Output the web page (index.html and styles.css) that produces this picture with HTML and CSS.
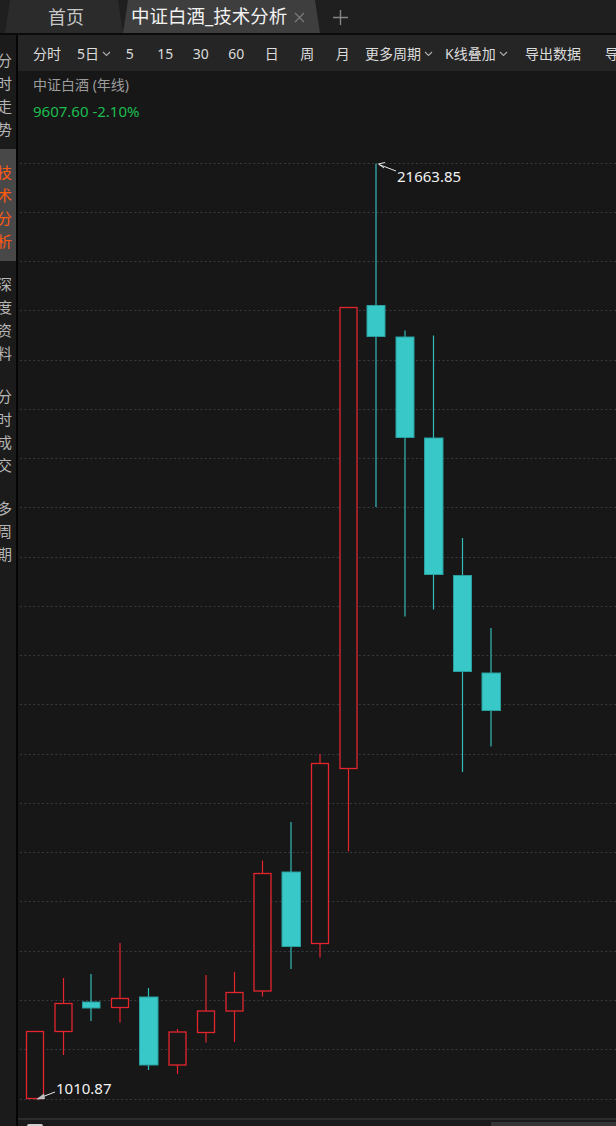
FILE: index.html
```html
<!DOCTYPE html>
<html lang="zh-CN">
<head>
    <meta charset="UTF-8">
    <meta name="viewport" content="width=device-width, initial-scale=1.0">
    <title>中证白酒_技术分析</title>
    <link rel="stylesheet" href="styles.css">
</head>
<body>
    <div class="app">
        <div class="tabbar">
            <div class="tab">首页</div>
            <div class="tab tab-active">
                <span>中证白酒_技术分析</span>
                <svg class="tab-close" width="11" height="11" viewBox="0 0 11 11">
                    <path d="M1 1 L10 10 M10 1 L1 10" stroke="#7a7a7a" stroke-width="1.3"/>
                </svg>
            </div>
            <svg class="tab-add" width="15" height="15" viewBox="0 0 15 15">
                <path d="M7.5 0 V15 M0 7.5 H15" stroke="#858585" stroke-width="1.4"/>
            </svg>
        </div>

        <div class="workspace">
            <aside class="side">
                <div class="side-item"><div class="side-text">分时走势</div></div>
                <div class="side-item side-active"><div class="side-text">技术分析</div></div>
                <div class="side-item"><div class="side-text">深度资料</div></div>
                <div class="side-item"><div class="side-text">分时成交</div></div>
                <div class="side-item"><div class="side-text">多周期</div></div>
            </aside>

            <main class="main">
                <div class="toolbar">
                    <span class="tb-first">分时</span>
                    <span class="tb-drop">5日<svg class="chev" width="9" height="6" viewBox="0 0 9 6"><path d="M1 1 L4.5 4.5 L8 1" fill="none" stroke="#aaa" stroke-width="1.2"/></svg></span>
                    <span class="tb-num">5</span>
                    <span class="tb-num">15</span>
                    <span class="tb-num">30</span>
                    <span class="tb-num">60</span>
                    <span class="tb-num">日</span>
                    <span class="tb-num">周</span>
                    <span class="tb-num">月</span>
                    <span class="tb-wide">更多周期<svg class="chev" width="9" height="6" viewBox="0 0 9 6"><path d="M1 1 L4.5 4.5 L8 1" fill="none" stroke="#aaa" stroke-width="1.2"/></svg></span>
                    <span class="tb-wide">K线叠加<svg class="chev" width="9" height="6" viewBox="0 0 9 6"><path d="M1 1 L4.5 4.5 L8 1" fill="none" stroke="#aaa" stroke-width="1.2"/></svg></span>
                    <span class="tb-wide">导出数据</span>
                    <span class="tb-wide">导出图片</span>
                </div>

                <div class="chart">
                    <div class="chart-info">
                        <div class="chart-title">中证白酒 (年线)</div>
                        <div class="chart-value">9607.60 -2.10%</div>
                    </div>

                    <svg class="kline" width="598" height="987" viewBox="18 131 598 987">
                        <!-- 网格线 -->
                        <g class="grid">
                            <line x1="20" x2="616" y1="163.5" y2="163.5"/>
                            <line x1="20" x2="616" y1="212.5" y2="212.5"/>
                            <line x1="20" x2="616" y1="261.5" y2="261.5"/>
                            <line x1="20" x2="616" y1="310.5" y2="310.5"/>
                            <line x1="20" x2="616" y1="360.5" y2="360.5"/>
                            <line x1="20" x2="616" y1="409.5" y2="409.5"/>
                            <line x1="20" x2="616" y1="458.5" y2="458.5"/>
                            <line x1="20" x2="616" y1="507.5" y2="507.5"/>
                            <line x1="20" x2="616" y1="557.5" y2="557.5"/>
                            <line x1="20" x2="616" y1="606.5" y2="606.5"/>
                            <line x1="20" x2="616" y1="655.5" y2="655.5"/>
                            <line x1="20" x2="616" y1="704.5" y2="704.5"/>
                            <line x1="20" x2="616" y1="754.5" y2="754.5"/>
                            <line x1="20" x2="616" y1="803.5" y2="803.5"/>
                            <line x1="20" x2="616" y1="852.5" y2="852.5"/>
                            <line x1="20" x2="616" y1="901.5" y2="901.5"/>
                            <line x1="20" x2="616" y1="951.5" y2="951.5"/>
                            <line x1="20" x2="616" y1="1000.5" y2="1000.5"/>
                            <line x1="20" x2="616" y1="1049.5" y2="1049.5"/>
                            <line x1="20" x2="616" y1="1099.5" y2="1099.5"/>
                        </g>

                        <!-- 阳线 -->
                        <g class="up">
                            <rect x="26.5" y="1031.5" width="17" height="67"/>

                            <line x1="63.5" x2="63.5" y1="978" y2="1003.5"/>
                            <line x1="63.5" x2="63.5" y1="1031.5" y2="1055"/>
                            <rect x="55" y="1003.5" width="17" height="28"/>

                            <line x1="120" x2="120" y1="943" y2="998.5"/>
                            <line x1="120" x2="120" y1="1007.5" y2="1022.5"/>
                            <rect x="111.5" y="998.5" width="17" height="9"/>

                            <line x1="177.5" x2="177.5" y1="1029" y2="1032"/>
                            <line x1="177.5" x2="177.5" y1="1065" y2="1074"/>
                            <rect x="169" y="1032" width="17" height="33"/>

                            <line x1="206" x2="206" y1="975" y2="1011"/>
                            <line x1="206" x2="206" y1="1032.5" y2="1042.5"/>
                            <rect x="197.5" y="1011" width="17" height="21.5"/>

                            <line x1="234.5" x2="234.5" y1="972" y2="992.5"/>
                            <line x1="234.5" x2="234.5" y1="1011" y2="1042"/>
                            <rect x="226" y="992.5" width="17" height="18.5"/>

                            <line x1="262.5" x2="262.5" y1="860.5" y2="873.5"/>
                            <line x1="262.5" x2="262.5" y1="991" y2="996.5"/>
                            <rect x="254" y="873.5" width="17" height="117.5"/>

                            <line x1="320" x2="320" y1="754" y2="763.5"/>
                            <line x1="320" x2="320" y1="943.5" y2="957.5"/>
                            <rect x="311.5" y="763.5" width="17" height="180"/>

                            <line x1="348.5" x2="348.5" y1="768.5" y2="851.5"/>
                            <rect x="340" y="307.5" width="17" height="461"/>
                        </g>

                        <!-- 阴线 -->
                        <g class="down">
                            <line x1="91" x2="91" y1="974" y2="1021"/>
                            <rect x="82.5" y="1002" width="17.5" height="6"/>

                            <line x1="148.5" x2="148.5" y1="988" y2="1070"/>
                            <rect x="139.5" y="997" width="18.5" height="68"/>

                            <line x1="291" x2="291" y1="822" y2="969"/>
                            <rect x="282" y="872" width="18.5" height="74.5"/>

                            <line x1="376" x2="376" y1="163.5" y2="507"/>
                            <rect x="367" y="305.5" width="18" height="31"/>

                            <line x1="405" x2="405" y1="330.5" y2="616.5"/>
                            <rect x="396" y="337" width="18" height="100.5"/>

                            <line x1="433.5" x2="433.5" y1="335.5" y2="609.5"/>
                            <rect x="424.5" y="438" width="18.5" height="136.5"/>

                            <line x1="462.5" x2="462.5" y1="538" y2="772"/>
                            <rect x="453.5" y="575.5" width="18" height="96"/>

                            <line x1="491" x2="491" y1="628" y2="746.5"/>
                            <rect x="482" y="673" width="18.5" height="37.5"/>
                        </g>

                        <!-- 最高 / 最低 标注 -->
                        <g class="mark">
                            <line x1="379" y1="164.5" x2="396" y2="171"/>
                            <path d="M385 162.5 L378.5 164 L384 168"/>
                            <text x="397" y="182">21663.85</text>

                            <line x1="38" y1="1098.5" x2="55" y2="1092"/>
                            <path class="mark-head" d="M36 1099.5 L44 1093.5 L45 1099 Z"/>
                            <text x="56" y="1094">1010.87</text>
                        </g>
                    </svg>
                </div>

                <div class="footer">
                    <span class="footer-btn"></span>
                    <span class="footer-thumb"></span>
                </div>
            </main>
        </div>
    </div>
</body>
</html>
```

FILE: styles.css
```css
body {
    margin: 0;
    background: #181818;
    font-family: "Noto Sans", "Noto Sans CJK SC", sans-serif;
    overflow: hidden;
}

.app {
    width: 616px;
    height: 1126px;
    display: flex;
    flex-direction: column;
}

/* 顶部标签栏 */
.tabbar {
    height: 33px;
    flex-shrink: 0;
    display: flex;
    align-items: flex-end;
    background: #1f1f20;
    border-bottom: 2px solid #0b0b0b;
    padding-left: 5px;
}

.tab {
    height: 33px;
    width: 118px;
    display: flex;
    align-items: center;
    justify-content: center;
    padding-left: 4px;
    box-sizing: border-box;
    background: #2b2b2c;
    color: #c8c8c8;
    font-size: 18px;
    line-height: 1;
    clip-path: polygon(5px 0, calc(100% - 5px) 0, 100% 100%, 0 100%);
    border-radius: 6px 6px 0 0;
}

.tab-active {
    width: 197px;
    justify-content: flex-start;
    padding-left: 8px;
    background: #3e3e3f;
    color: #f2f2f2;
    font-size: 18.5px;
}

.tab-close {
    margin-left: 7px;
    margin-top: 1px;
}

.tab-add {
    align-self: center;
    margin-left: 13px;
    margin-top: 1px;
}

.workspace {
    flex: 1;
    display: flex;
    min-height: 0;
}

/* 左侧竖排菜单 */
.side {
    width: 16px;
    flex-shrink: 0;
    background: #1b1b1b;
    border-right: 2px solid #050505;
    padding-top: 2px;
    overflow: hidden;
}

.side-item {
    padding: 12px 0 8px;
    font-size: 15px;
    line-height: 23px;
    color: #b5b5b5;
}

.side-text {
    width: 15px;
    margin-left: -3px;
}

.side-active {
    background: #484848;
    color: #ff5a12;
}

.main {
    flex: 1;
    display: flex;
    flex-direction: column;
    min-width: 0;
}

/* 周期工具栏 */
.toolbar {
    height: 36px;
    flex-shrink: 0;
    display: flex;
    align-items: center;
    padding-left: 15px;
    background: #252525;
    color: #dcdcdc;
    font-size: 14px;
    white-space: nowrap;
    overflow: hidden;
}

.toolbar span {
    flex-shrink: 0;
    display: flex;
    align-items: center;
    box-sizing: border-box;
}

.tb-first {
    width: 44px;
}

.tb-drop {
    width: 35px;
}

.tb-num {
    width: 35.5px;
    justify-content: center;
}

.tb-wide {
    width: 80px;
    padding-left: 4.5px;
}

.chev {
    margin-left: 3px;
    margin-top: 1px;
}

/* K线区域 */
.chart {
    flex: 1;
    display: flex;
    flex-direction: column;
    background: #171717;
}

.chart-info {
    height: 60px;
    padding: 1px 0 0 15px;
    box-sizing: border-box;
    line-height: 26px;
}

.chart-title {
    color: #9c9c9c;
    font-size: 14px;
}

.chart-value {
    color: #1dbd4f;
    font-size: 15px;
}

.kline {
    display: block;
}

.grid line {
    stroke: #363a42;
    stroke-width: 1;
    stroke-dasharray: 2 2.4;
}

.up line {
    stroke: #e3252e;
    stroke-width: 1.2;
}

.up rect {
    fill: #171717;
    stroke: #e3252e;
    stroke-width: 1.3;
}

.down line {
    stroke: #35b9b9;
    stroke-width: 1.2;
}

.down rect {
    fill: #38c8c8;
    stroke: #2b9f9f;
    stroke-width: 1;
}

.mark line,
.mark path {
    stroke: #e8e8e8;
    stroke-width: 1;
    fill: none;
}

.mark .mark-head {
    fill: #bdbdbd;
    stroke: none;
}

.mark text {
    fill: #f2f2f2;
    font-family: "Noto Sans", sans-serif;
    font-size: 15px;
}

/* 底部滚动条 */
.footer {
    height: 8px;
    flex-shrink: 0;
    box-sizing: border-box;
    border-top: 2px solid #2b2b2b;
    background: #1a1a1a;
    display: flex;
    align-items: flex-end;
}

.footer-btn {
    width: 16px;
    height: 2px;
    margin-left: 9px;
    background: #cfcfcf;
    border-radius: 2px 2px 0 0;
}

.footer-thumb {
    width: 125px;
    height: 4px;
    margin-left: auto;
    background: #353535;
}
```
